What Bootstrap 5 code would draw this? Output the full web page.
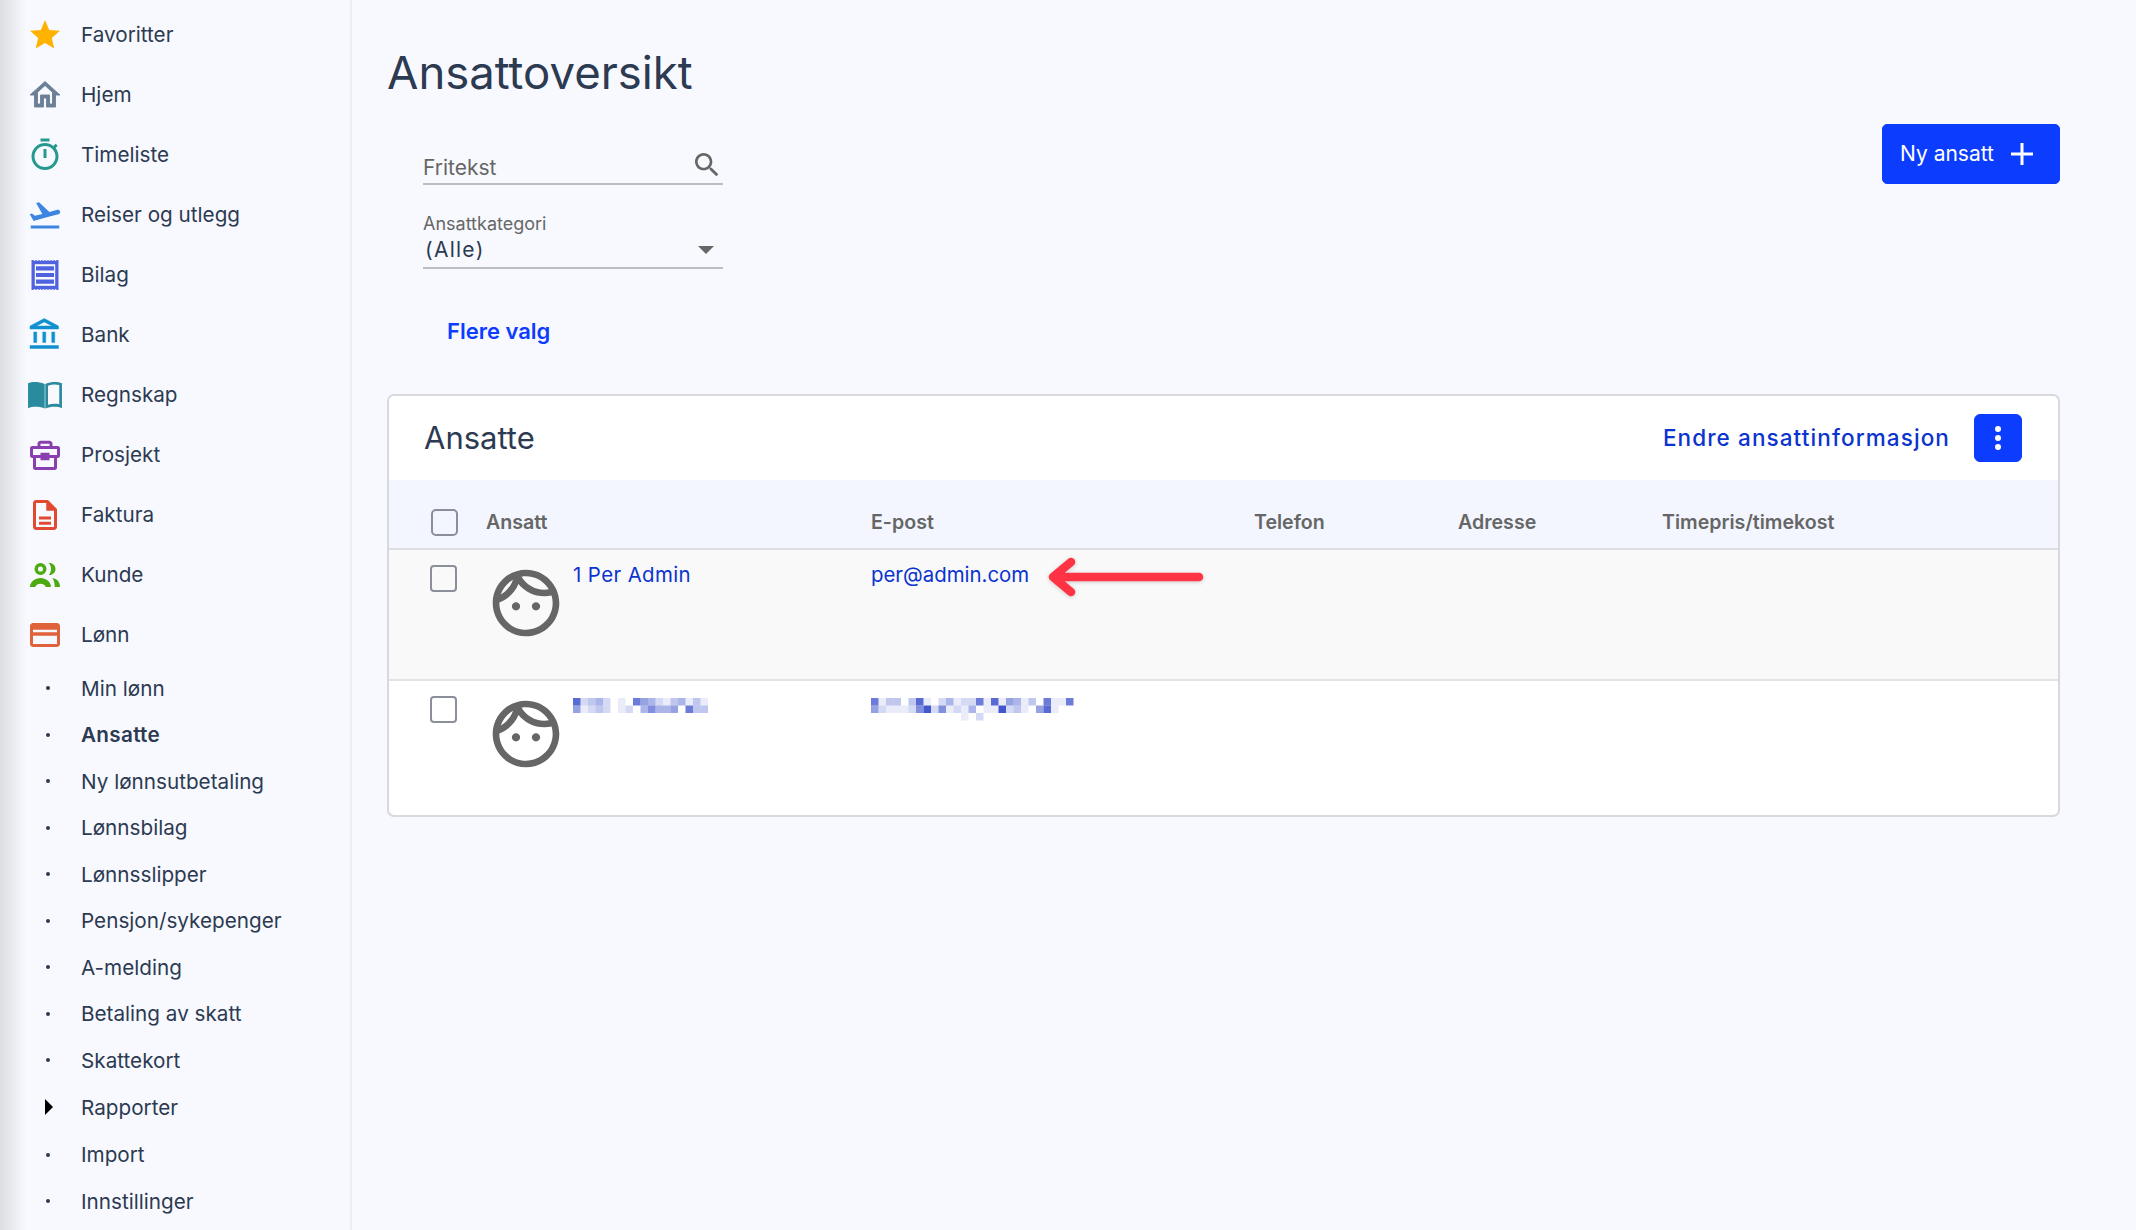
<!DOCTYPE html>
<html lang="nb">
<head>
  <meta charset="UTF-8" />
  <meta name="viewport" content="width=device-width, initial-scale=1.0"/>
  <title>Ansattoversikt</title>
  <link href="https://cdn.jsdelivr.net/npm/bootstrap@5.3.0/dist/css/bootstrap.min.css" rel="stylesheet"/>
  <style>
    html, body { height: 100%; }
    body {
      background: #f8f9fe;
      color: #2c3a52;
      font-family: Inter, "Noto Sans", sans-serif;
      overflow: hidden;
    }
    .side-menu {
      width: 352px;
      height: 1230px;
      flex: none;
      padding-top: 5px;
      border-right: 2px solid #eceef3;
      background: linear-gradient(90deg, #dcdee2, #f8f9fe 26px);
    }
    .side-menu .nav-link {
      color: #2c3a52;
      font-size: 20.7px;
      padding: 0;
    }
    .top-link { height: 60px; padding-left: 27px !important; gap: 18px; }
    .sub-link { height: 46.5px; padding-left: 81px !important; position: relative; }
    .sub-link::before {
      content: "";
      position: absolute;
      left: 46px;
      top: 21px;
      width: 4px;
      height: 4px;
      border-radius: 50%;
      background: #2c3a52;
    }
    .sub-link.is-current { font-weight: 600; letter-spacing: .3px; }
    .sub-link.has-caret { height: 48px; }
    .sub-link.has-caret::before {
      left: 45px;
      top: 15px;
      width: 0;
      height: 0;
      border-radius: 0;
      background: none;
      border-left: 8px solid #000;
      border-top: 8px solid transparent;
      border-bottom: 8px solid transparent;
    }
    .page-body { flex: 1; padding: 47px 76px 0 35px; min-width: 0; }
    .page-title { font-size: 45.5px; line-height: 52px; font-weight: 400; margin: 0; color: #2c3a52; }
    .filter-bar { margin-top: 25px; }
    .filter-col { padding-left: 36px; width: 336px; }
    .line-field { width: 300px; border-bottom: 2px solid #bcbdc2; position: relative; }
    .line-input {
      height: 59px;
      width: 100%;
      padding: 27px 0 0;
      border: 0;
      background: transparent;
      font-size: 21px;
      color: #666;
      outline: 0;
    }
    .line-input::placeholder { color: #666; opacity: 1; }
    .search-glyph { position: absolute; right: 0; top: 25px; }
    .pick-field { margin-top: 24px; height: 60px; }
    .pick-label { font-size: 18px; line-height: 22px; color: #666; padding-top: 4px; }
    .pick-value { font-size: 21px; line-height: 30px; letter-spacing: .06em; padding-left: 2px; }
    .pick-caret {
      width: 0;
      height: 0;
      border-left: 8px solid transparent;
      border-right: 8px solid transparent;
      border-top: 8px solid #666;
      margin-right: 9px;
    }
    .more-link {
      display: block;
      margin: 46px 0 0 24px;
      font-size: 22px;
      line-height: 32px;
      font-weight: 600;
      color: #0c3dff;
      text-decoration: none;
    }
    .add-btn {
      width: 178px;
      height: 60px;
      border-radius: 5px;
      background: #0c3dff;
      border-color: #0c3dff;
      font-size: 21px;
      gap: 17px;
      padding: 0 0 0 17px;
    }
    .staff-card {
      margin-top: 47px;
      height: 423px;
      border: 2px solid #d8d9dc;
      border-radius: 7px;
      overflow: hidden;
      background: #fff;
    }
    .card-top { height: 87px; padding: 0 36px 0 35px; background: #fff; border: 0; }
    .card-name { font-size: 31px; font-weight: 400; margin: 0 0 1px; color: #2c3a52; }
    .edit-link { font-size: 22.5px; font-weight: 500; letter-spacing: 1.1px; color: #0b33cf; text-decoration: none; }
    .dots-btn {
      width: 48px;
      height: 48px;
      padding: 0;
      border-radius: 6px;
      background: #0c3dff;
      border-color: #0c3dff;
    }
    .staff-table { table-layout: fixed; margin: 0; }
    .staff-table > :not(caption) > * > * { border: 0; padding: 0; box-shadow: none; }
    .staff-head { --bs-table-bg: #f3f6ff; height: 69px; }
    .staff-head th {
      border-bottom: 2px solid #dcdde0 !important;
      vertical-align: bottom;
      padding-bottom: 14px !important;
      font-size: 19.6px;
      line-height: 24px;
      font-weight: 600;
      color: #666;
    }
    .staff-row { height: 131px; }
    .staff-row.is-marked { --bs-table-bg: #f9f9f9; }
    .staff-row.is-marked td { border-bottom: 2px solid #e2e3e5 !important; }
    .staff-row td { vertical-align: top; padding-top: 14px !important; }
    .staff-row:last-child { height: 135px; }
    .staff-row a { display: block; margin-top: -1px; color: #0b33cf; text-decoration: none; font-size: 20.4px; line-height: 24px; }
    .staff-row .person-link { letter-spacing: .4px; }
    .tick-box {
      display: block;
      margin: 1px 0 0 41px;
      width: 27px;
      height: 27px;
      border: 2px solid #8a8f99;
      border-radius: 3px;
      background-color: transparent;
    }
    .staff-head .tick-box { margin: 0 0 0 42px; position: relative; top: 2px; }
    .face-glyph { display: block; margin-top: -1px; flex: none; }
    .name-cell { gap: 7px; }
    .pixel-strip { display: block; margin-top: 3px; }
    .pointer-arrow { position: absolute; left: 656px; top: 156px; filter: drop-shadow(0 1px 2px rgba(0,0,0,.18)); }
  </style>
</head>
<body>
<div class="d-flex">

  <!-- left menu -->
  <aside class="side-menu">
    <nav class="nav flex-column">
      <a class="nav-link top-link d-flex align-items-center" href="#">
        <svg width="36" height="36" viewBox="0 0 24 24" fill="#ffb300"><path d="M12 17.27L18.18 21l-1.64-7.03L22 9.24l-7.19-.61L12 2 9.19 8.63 2 9.24l5.46 4.73L5.82 21z"/></svg>Favoritter</a>
      <a class="nav-link top-link d-flex align-items-center" href="#">
        <svg width="36" height="36" viewBox="0 0 24 24" fill="#6b8096" stroke="#6b8096" stroke-width=".6"><path d="M12 5.69l5 4.5V18h-2v-6H9v6H7v-7.81l5-4.5M12 3L2 12h3v8h6v-6h2v6h6v-8h3L12 3z"/></svg>Hjem</a>
      <a class="nav-link top-link d-flex align-items-center" href="#">
        <svg width="36" height="36" viewBox="0 0 24 24" fill="#26998f"><path d="M15 1H9v2h6V1zm-4 13h2V8h-2v6zm8.03-6.61l1.42-1.42c-.43-.51-.9-.99-1.41-1.41l-1.42 1.42C16.07 4.74 14.12 4 12 4c-4.97 0-9 4.03-9 9s4.02 9 9 9 9-4.03 9-9c0-2.12-.74-4.07-1.97-5.61zM12 20c-3.87 0-7-3.13-7-7s3.13-7 7-7 7 3.13 7 7-3.13 7-7 7z"/></svg>Timeliste</a>
      <a class="nav-link top-link d-flex align-items-center" href="#">
        <svg width="36" height="36" viewBox="0 0 24 24" fill="#3d85e0"><path d="M2.5 19h19v2h-19zm19.57-9.36c-.21-.8-1.04-1.28-1.84-1.06L14.92 10l-6.9-6.43-1.93.51 4.14 7.17-4.97 1.33-1.97-1.54-1.45.39 1.82 3.16.77 1.33 1.6-.43 5.31-1.42 4.35-1.16L21 11.49c.81-.23 1.28-1.05 1.07-1.85z"/></svg>Reiser og utlegg</a>
      <a class="nav-link top-link d-flex align-items-center" href="#">
        <svg width="36" height="36" viewBox="0 0 24 24"><path fill="#4f63e0" d="M3 2h1l1 .6L6 2l1 .6L8 2l1 .6L10 2l1 .6L12 2l1 .6L14 2l1 .6L16 2l1 .6L18 2l1 .6L20 2h1v20h-1l-1-.6-1 .6-1-.6-1 .6-1-.6-1 .6-1-.6-1 .6-1-.6-1 .6-1-.6-1 .6-1-.6-1 .6-1-.6-1 .6H3z"/><path fill="#f8f9fe" d="M5.200 4.800h13.600v14.400H5.200z"/><path fill="#4f63e0" d="M6 6.200h12v2.800H6zM6 10.600h12v2.800H6zM6 15h12v2.800H6z"/></svg>Bilag</a>
      <a class="nav-link top-link d-flex align-items-center" href="#">
        <svg width="36" height="36" viewBox="0 0 24 24" fill="#1090cf" stroke="#1090cf" stroke-width=".3"><path d="M6.5 10h-2v7h2v-7zm6 0h-2v7h2v-7zm8.5 9H2v2h19v-2zm-2.5-9h-2v7h2v-7zm-7-6.74L16.71 6H6.29l5.21-2.74m0-2.26L2 6v2h19V6l-9.5-5z"/></svg>Bank</a>
      <a class="nav-link top-link d-flex align-items-center" href="#">
        <svg width="36" height="36" viewBox="0 0 24 24"><path fill="#2a8a9e" d="M.7 4.200C3.200 3.200 7 2.800 11.800 4.600v16.400c-1.300-.6-2.200-.8-3.400-1-3-.4-5.400-.2-7.700.8z"/><path fill="#2a8a9e" d="M12.200 4.600C16.500 2.800 20.500 3 23.300 4.200v16.600c-3-1.200-7-1.400-11.100.2zm1.800 1.200V18.500c2.600-.8 5-.8 7.500-.4V5.400c-2.500-.6-5-.5-7.500.4z"/></svg>Regnskap</a>
      <a class="nav-link top-link d-flex align-items-center" href="#">
        <svg width="36" height="36" viewBox="0 0 24 24" fill="#8a3fb0"><path d="M9 2.500h6c1.100 0 2 .9 2 2V6h3.500c1 0 1.500.7 1.500 1.500v5c0 .8-.5 1.500-1.500 1.500H20v6.500c0 .8-.6 1.500-1.500 1.500h-13C4.600 22 4 21.300 4 20.500V14h-.5C2.500 14 2 13.300 2 12.500v-5C2 6.700 2.500 6 3.500 6H7V4.500c0-1.100.9-2 2-2zm0 2V6h6V4.500zM4 8v4h5v-1.500h6V12h5V8zm2 6v6h12v-6h-3v1.500H9V14z"/><path d="M10.800 11.700h2.400v2.400h-2.400z"/></svg>Prosjekt</a>
      <a class="nav-link top-link d-flex align-items-center" href="#">
        <svg width="36" height="36" viewBox="0 0 24 24" fill="#e04a30"><path d="M14 2H6c-1.100 0-2 .9-2 2v16c0 1.100.9 2 2 2h12c1.100 0 2-.9 2-2V8l-6-6zm4 18H6V4h7v5h5v11z"/><path d="M13 3l6 6h-6zM8 13h8v2H8zM8 16.500h8v2H8z"/></svg>Faktura</a>
      <a class="nav-link top-link d-flex align-items-center" href="#">
        <svg width="36" height="36" viewBox="0 0 24 24" fill="#4caa12"><path d="M9 4a4 4 0 1 1 0 8 4 4 0 0 1 0-8zm0 2.300a1.700 1.700 0 1 0 0 3.400 1.700 1.700 0 0 0 0-3.400z"/><path d="M14.500 4c2.400-.3 4.500 1.500 4.500 4s-2.100 4.300-4.500 4c1-1.100 1.500-2.500 1.500-4s-.5-2.900-1.500-4z"/><path d="M2 20c0-3.500 3.500-6 7-6s7 2.500 7 6h-3.500c-.5-1.500-2-2.200-3.500-2.200S6 18.500 5.500 20zM17 14c3 .5 5 2.500 5 6h-3.500c0-2.300-.6-4.400-1.500-6z"/></svg>Kunde</a>
      <a class="nav-link top-link d-flex align-items-center" href="#">
        <svg width="36" height="36" viewBox="0 0 24 24" fill="#e0623a"><path d="M4 4h16c1.100 0 2 .9 2 2v12c0 1.100-.9 2-2 2H4c-1.100 0-2-.9-2-2V6c0-1.100.9-2 2-2zm0 4.500v1.600h16V8.500zm0 4V18h16v-5.500z"/></svg>Lønn</a>
      <a class="nav-link sub-link d-flex align-items-center" href="#">Min lønn</a>
      <a class="nav-link sub-link d-flex align-items-center is-current" href="#">Ansatte</a>
      <a class="nav-link sub-link d-flex align-items-center" href="#">Ny lønnsutbetaling</a>
      <a class="nav-link sub-link d-flex align-items-center" href="#">Lønnsbilag</a>
      <a class="nav-link sub-link d-flex align-items-center" href="#">Lønnsslipper</a>
      <a class="nav-link sub-link d-flex align-items-center" href="#">Pensjon/sykepenger</a>
      <a class="nav-link sub-link d-flex align-items-center" href="#">A-melding</a>
      <a class="nav-link sub-link d-flex align-items-center" href="#">Betaling av skatt</a>
      <a class="nav-link sub-link d-flex align-items-center" href="#">Skattekort</a>
      <a class="nav-link sub-link d-flex align-items-center has-caret" href="#">Rapporter</a>
      <a class="nav-link sub-link d-flex align-items-center" href="#">Import</a>
      <a class="nav-link sub-link d-flex align-items-center" href="#">Innstillinger</a>
    </nav>
  </aside>

  <main class="page-body">
    <h1 class="page-title">Ansattoversikt</h1>

    <div class="d-flex justify-content-between align-items-start filter-bar">
      <div class="filter-col">
        <div class="line-field">
          <input class="line-input" type="text" placeholder="Fritekst">
          <svg class="search-glyph" width="32" height="32" viewBox="0 0 24 24" fill="#666"><path d="M15.500 14h-.79l-.28-.27C15.410 12.590 16 11.110 16 9.500 16 5.910 13.090 3 9.500 3S3 5.910 3 9.500 5.910 16 9.500 16c1.610 0 3.090-.59 4.230-1.570l.27.28v.79l5 4.990L20.490 19l-4.990-5zm-6 0C7.010 14 5 11.990 5 9.500S7.010 5 9.500 5 14 7.010 14 9.500 11.990 14 9.500 14z"/></svg>
        </div>
        <div class="line-field pick-field">
          <div class="pick-label">Ansattkategori</div>
          <div class="d-flex justify-content-between align-items-center">
            <span class="pick-value">(Alle)</span>
            <span class="pick-caret"></span>
          </div>
        </div>
        <a class="more-link" href="#">Flere valg</a>
      </div>
      <button class="btn btn-primary add-btn d-flex align-items-center" type="button">
        Ny ansatt
        <svg width="22" height="22" viewBox="0 0 22 22" fill="#fff"><path d="M9.500 0h3v9.500H22v3h-9.500V22h-3v-9.500H0v-3h9.500z"/></svg>
      </button>
    </div>

    <div class="card staff-card">
      <div class="card-header card-top d-flex justify-content-between align-items-center">
        <h2 class="card-name">Ansatte</h2>
        <div class="d-flex align-items-center gap-4">
          <a class="edit-link" href="#">Endre ansattinformasjon</a>
          <button class="btn btn-primary dots-btn d-flex align-items-center justify-content-center" type="button" aria-label="Mer">
            <svg width="6" height="24" viewBox="0 0 6 24" fill="#fff"><circle cx="3" cy="3" r="3"/><circle cx="3" cy="12" r="3"/><circle cx="3" cy="21" r="3"/></svg>
          </button>
        </div>
      </div>

      <table class="table staff-table">
        <colgroup>
          <col style="width:97px"><col style="width:385px"><col style="width:383px"><col style="width:204px"><col style="width:204px"><col>
        </colgroup>
        <thead>
          <tr class="staff-head">
            <th><input class="form-check-input tick-box" type="checkbox" aria-label="Velg alle"></th>
            <th>Ansatt</th>
            <th>E-post</th>
            <th>Telefon</th>
            <th>Adresse</th>
            <th>Timepris/timekost</th>
          </tr>
        </thead>
        <tbody>
          <tr class="staff-row is-marked">
            <td><input class="form-check-input tick-box" type="checkbox" aria-label="Velg"></td>
            <td>
              <div class="d-flex name-cell">
                <svg class="face-glyph" width="80" height="80" viewBox="0 0 24 24" fill="#666"><path d="M10.250 13c0 .69-.56 1.250-1.250 1.250S7.750 13.690 7.750 13s.56-1.250 1.250-1.250 1.250.56 1.250 1.250zM15 11.750c-.69 0-1.250.56-1.250 1.250s.56 1.250 1.250 1.250 1.250-.56 1.250-1.250-.56-1.250-1.250-1.250zm7 .25c0 5.520-4.480 10-10 10S2 17.520 2 12 6.480 2 12 2s10 4.480 10 10zM10.660 4.120C12.060 6.440 14.600 8 17.500 8c.46 0 .91-.05 1.340-.12C17.440 5.560 14.900 4 12 4c-.46 0-.91.05-1.340.12zM4.420 9.470c1.710-.97 3.030-2.550 3.660-4.440C6.370 6 5.050 7.580 4.420 9.470zM20 12c0-.78-.12-1.530-.33-2.240-.7.15-1.420.24-2.170.24-3.130 0-5.920-1.440-7.760-3.690C8.690 8.870 6.600 10.880 4 11.860c.01.04 0 .09 0 .14 0 4.410 3.590 8 8 8s8-3.590 8-8z"/></svg>
                <a class="person-link" href="#">1 Per Admin</a>
              </div>
            </td>
            <td><a href="#">per@admin.com</a></td>
            <td></td><td></td><td></td>
          </tr>
          <tr class="staff-row">
            <td><input class="form-check-input tick-box" type="checkbox" aria-label="Velg"></td>
            <td>
              <div class="d-flex name-cell">
                <svg class="face-glyph" width="80" height="80" viewBox="0 0 24 24" fill="#666"><path d="M10.250 13c0 .69-.56 1.250-1.250 1.250S7.750 13.690 7.750 13s.56-1.250 1.250-1.250 1.250.56 1.250 1.250zM15 11.750c-.69 0-1.250.56-1.250 1.250s.56 1.250 1.250 1.250 1.250-.56 1.250-1.250-.56-1.250-1.250-1.250zm7 .25c0 5.520-4.480 10-10 10S2 17.520 2 12 6.480 2 12 2s10 4.480 10 10zM10.660 4.120C12.060 6.440 14.600 8 17.500 8c.46 0 .91-.05 1.340-.12C17.440 5.560 14.900 4 12 4c-.46 0-.91.05-1.340.12zM4.420 9.470c1.710-.97 3.030-2.550 3.660-4.440C6.370 6 5.050 7.580 4.420 9.470zM20 12c0-.78-.12-1.530-.33-2.240-.7.15-1.420.24-2.170.24-3.130 0-5.920-1.440-7.760-3.690C8.690 8.870 6.600 10.880 4 11.860c.01.04 0 .09 0 .14 0 4.410 3.590 8 8 8s8-3.590 8-8z"/></svg>
                <svg class="pixel-strip" data-rows="823420107542134131|512320120464450733" width="135" height="16"></svg>
              </div>
            </td>
            <td><svg class="pixel-strip" data-rows="713303810241227181541307117|521112692612140119231058100|000000000000102" width="203" height="23"></svg></td>
            <td></td><td></td><td></td>
          </tr>
        </tbody>
      </table>

      <svg class="pointer-arrow" width="165" height="50" viewBox="0 0 165 50" fill="none" stroke="#ff3344" stroke-width="8.5" stroke-linecap="round" stroke-linejoin="round"><path d="M154 25H8M26 10L8 25l18 15"/></svg>
    </div>
  </main>
</div>

<script src="https://cdn.jsdelivr.net/npm/bootstrap@5.3.0/dist/js/bootstrap.bundle.min.js"></script>
<script>
  // the blurred-out name and e-mail, one digit per mosaic cell (0 = empty, 9 = darkest)
  document.querySelectorAll(".pixel-strip").forEach(function (svg) {
    svg.dataset.rows.split("|").forEach(function (row, y) {
      row.split("").forEach(function (level, x) {
        if (level === "0") return;
        const cell = document.createElementNS("http://www.w3.org/2000/svg", "rect");
        cell.setAttribute("x", x * 7.5);
        cell.setAttribute("y", y * 7.5);
        cell.setAttribute("width", 7.5);
        cell.setAttribute("height", 7.5);
        cell.setAttribute("fill", "#2f45c8");
        cell.setAttribute("fill-opacity", level / 10);
        svg.appendChild(cell);
      });
    });
  });
</script>
</body>
</html>
